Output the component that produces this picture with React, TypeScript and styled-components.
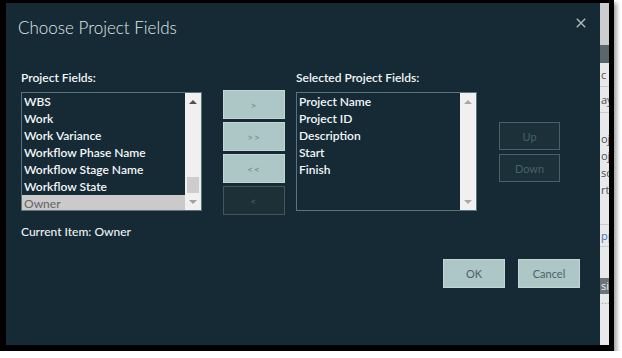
import React from "react";
import styled, { createGlobalStyle } from "styled-components";

const GlobalStyle = createGlobalStyle`
  html, body { margin: 0; padding: 0; background: #ffffff; }
  body { font-family: Lato, "Liberation Sans", sans-serif; }
  * { box-sizing: border-box; }
`;

const Screen = styled.div`
  display: flex;
  width: 614px;
  height: 351px;
  border-style: solid;
  border-color: #000;
  border-width: 3px 5px 6px 6px;
  box-shadow: 3px 3px 4px rgba(0, 0, 0, 0.35);
  background: #152a34;
`;

const Dialog = styled.div`
  width: 594px;
  height: 100%;
  display: flex;
  flex-direction: column;
  background: #152a34;
  padding: 15px 14px 0 12px;
`;

const Header = styled.div`
  display: flex;
  justify-content: space-between;
  align-items: flex-start;
`;

const Title = styled.h1`
  margin: 0;
  font-family: Lato, "Liberation Sans", sans-serif;
  font-size: 17px;
  line-height: 20px;
  font-weight: 300;
  color: #e0e7ea;
`;

const CloseButton = styled.button`
  display: flex;
  padding: 0;
  margin: 0;
  border: none;
  background: transparent;
  width: 10px;
  height: 10px;
  cursor: pointer;
`;

const Body = styled.div`
  display: flex;
  align-items: flex-start;
  margin: 32px 0 0 3px;
`;

const Column = styled.div<{ $width: number; $gap?: number; $top?: number }>`
  display: flex;
  flex-direction: column;
  width: ${(p) => p.$width}px;
  margin-left: ${(p) => p.$gap ?? 0}px;
  padding-top: ${(p) => p.$top ?? 0}px;
`;

const Label = styled.div`
  font-size: 12px;
  line-height: 15px;
  font-weight: 600;
  color: #f2f6f7;
  margin-bottom: 7px;
  white-space: nowrap;
`;

const List = styled.div`
  display: flex;
  height: 119px;
  border: 1px solid #5b747a;
  background: #152a34;
  overflow: hidden;
`;

const Items = styled.div`
  flex: 1;
  overflow: hidden;
`;

const Item = styled.div<{ $selected?: boolean }>`
  height: 17px;
  line-height: 17px;
  padding-left: 2px;
  font-size: 12px;
  font-weight: ${(p) => (p.$selected ? 500 : 600)};
  color: ${(p) => (p.$selected ? "#6a6a6a" : "#f4f7f8")};
  background: ${(p) => (p.$selected ? "#cacaca" : "transparent")};
  white-space: nowrap;
`;

const ScrollBar = styled.div`
  width: 16px;
  display: flex;
  flex-direction: column;
  background: #f0f0f0;
`;

const ArrowBox = styled.div`
  height: 17px;
  display: flex;
  align-items: center;
  justify-content: center;
`;

const Arrow = styled.div<{ $dir: "up" | "down"; $disabled?: boolean }>`
  width: 0;
  height: 0;
  border-left: 4px solid transparent;
  border-right: 4px solid transparent;
  ${(p) =>
    p.$dir === "up"
      ? `border-bottom: 4px solid ${p.$disabled ? "#a8a8a8" : "#505050"};`
      : `border-top: 4px solid ${p.$disabled ? "#a8a8a8" : "#a0a0a0"};`}
`;

const Track = styled.div`
  flex: 1;
  display: flex;
  flex-direction: column;
  justify-content: flex-end;
  align-items: center;
`;

const Thumb = styled.div`
  width: 12px;
  height: 16px;
  background: #cdcdcd;
`;

const ActionButton = styled.button<{ $disabled?: boolean }>`
  width: 100%;
  height: 29px;
  margin: 0;
  padding: 0;
  font-family: Lato, "Liberation Sans", sans-serif;
  font-size: 10px;
  letter-spacing: 1px;
  border: 1px solid ${(p) => (p.$disabled ? "#3f575d" : "#c3d6d6")};
  background: ${(p) => (p.$disabled ? "#1d3037" : "#adc6c6")};
  color: ${(p) => (p.$disabled ? "#4b6469" : "#72888c")};
  & + & {
    margin-top: 3px;
  }
`;

const SideButton = styled.button`
  width: 100%;
  height: 28px;
  margin: 0;
  padding: 0;
  font-family: Lato, "Liberation Sans", sans-serif;
  font-size: 11px;
  border: 1px solid #45626a;
  background: #1b3038;
  color: #44636a;
  & + & {
    margin-top: 4px;
  }
`;

const CurrentItem = styled.div`
  margin-top: 13px;
  font-size: 12px;
  line-height: 15px;
  font-weight: 500;
  color: #eef3f4;
  white-space: nowrap;
`;

const Footer = styled.div`
  display: flex;
  justify-content: flex-end;
  gap: 13px;
  margin-top: 20px;
  padding-right: 6px;
`;

const FooterButton = styled.button`
  width: 62px;
  height: 29px;
  margin: 0;
  padding: 0;
  font-family: Lato, "Liberation Sans", sans-serif;
  font-size: 11px;
  border: 1px solid #c3d6d6;
  background: #adc6c6;
  color: #4d6165;
`;

/* the page behind the dialog, visible as a thin strip */
const Backdrop = styled.div`
  width: 9px;
  display: flex;
  flex-direction: column;
  background: #e8e9ea;
  overflow: hidden;
  font-family: "Open Sans", sans-serif;
  font-size: 11px;
  color: #4a4f55;
`;

const BackRow = styled.div<{ $h: number; $bg?: string; $color?: string; $line?: boolean }>`
  height: ${(p) => p.$h}px;
  flex-shrink: 0;
  line-height: ${(p) => p.$h}px;
  background: ${(p) => p.$bg ?? "transparent"};
  color: ${(p) => p.$color ?? "inherit"};
  border-bottom: ${(p) => (p.$line ? "1px solid #c9cbcd" : "none")};
  white-space: nowrap;
  padding-left: 1px;
`;

const leftItems = [
  "WBS",
  "Work",
  "Work Variance",
  "Workflow Phase Name",
  "Workflow Stage Name",
  "Workflow State",
];

const rightItems = ["Project Name", "Project ID", "Description", "Start", "Finish"];

export default function App() {
  return (
    <>
      <GlobalStyle />
      <Screen>
        <Dialog>
          <Header>
            <Title>Choose Project Fields</Title>
            <CloseButton aria-label="Close">
              <svg width="10" height="10" viewBox="0 0 10 10">
                <path d="M0.8 0.8 L9.2 9.2 M9.2 0.8 L0.8 9.2" stroke="#a9b5b9" strokeWidth="1.5" />
              </svg>
            </CloseButton>
          </Header>
          <Body>
            <Column $width={181}>
              <Label>Project Fields:</Label>
              <List>
                <Items>
                  {leftItems.map((t) => (
                    <Item key={t}>{t}</Item>
                  ))}
                  <Item $selected>Owner</Item>
                </Items>
                <ScrollBar>
                  <ArrowBox>
                    <Arrow $dir="up" />
                  </ArrowBox>
                  <Track>
                    <Thumb />
                  </Track>
                  <ArrowBox>
                    <Arrow $dir="down" />
                  </ArrowBox>
                </ScrollBar>
              </List>
              <CurrentItem>Current Item: Owner</CurrentItem>
            </Column>
            <Column $width={62} $gap={21} $top={20}>
              <ActionButton>&gt;</ActionButton>
              <ActionButton>&gt;&gt;</ActionButton>
              <ActionButton>&lt;&lt;</ActionButton>
              <ActionButton $disabled>&lt;</ActionButton>
            </Column>
            <Column $width={181} $gap={11}>
              <Label>Selected Project Fields:</Label>
              <List>
                <Items>
                  {rightItems.map((t) => (
                    <Item key={t}>{t}</Item>
                  ))}
                </Items>
                <ScrollBar>
                  <ArrowBox>
                    <Arrow $dir="up" $disabled />
                  </ArrowBox>
                  <Track />
                  <ArrowBox>
                    <Arrow $dir="down" $disabled />
                  </ArrowBox>
                </ScrollBar>
              </List>
            </Column>
            <Column $width={61} $gap={22} $top={52}>
              <SideButton>Up</SideButton>
              <SideButton>Down</SideButton>
            </Column>
          </Body>
          <Footer>
            <FooterButton>OK</FooterButton>
            <FooterButton>Cancel</FooterButton>
          </Footer>
        </Dialog>
        <Backdrop aria-hidden="true">
          <BackRow $h={42} $bg="#cbcdcf" />
          <BackRow $h={18} $bg="#5a656c" />
          <BackRow $h={24} $line $color="#6b4a44">c</BackRow>
          <BackRow $h={26} $line>ay</BackRow>
          <BackRow $h={17} />
          <BackRow $h={17}>oje</BackRow>
          <BackRow $h={17}>oje</BackRow>
          <BackRow $h={17}>sc</BackRow>
          <BackRow $h={17}>rt</BackRow>
          <BackRow $h={27} $line />
          <BackRow $h={22} $line $color="#4a6fc0">pp</BackRow>
          <BackRow $h={31} />
          <BackRow $h={16} $bg="#6d7479" $color="#f0f0f0">sic</BackRow>
          <BackRow $h={12} $color="#9aa">...</BackRow>
        </Backdrop>
      </Screen>
    </>
  );
}
